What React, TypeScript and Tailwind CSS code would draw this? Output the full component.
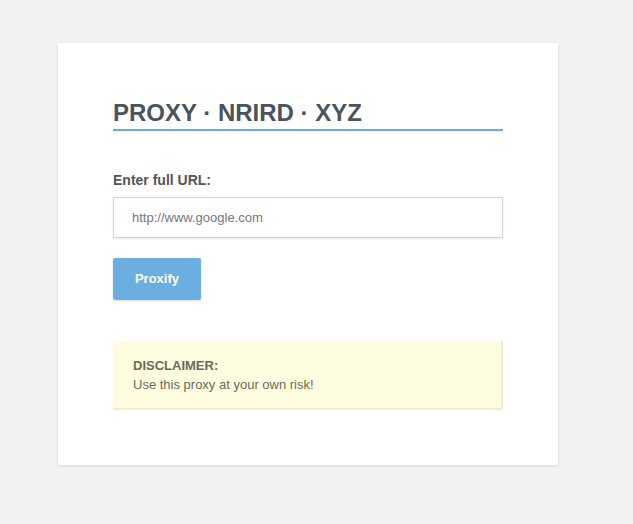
import React from 'react';

export default function App() {
  return (
    <div className="min-h-[524px] bg-[#f2f2f2] pt-[43px] pl-[58px] font-['Liberation_Sans',Arial,sans-serif]">
      <div className="w-[500px] bg-white px-[55px] pt-[55px] pb-[55px] shadow-[0_1px_3px_rgba(0,0,0,0.12)]">
        <h1 className="border-b-2 border-[#6aaddf] pb-[1px] text-[24px] font-bold leading-[30px] text-[#4b545c]">
          PROXY · NRIRD · XYZ
        </h1>

        <form className="mt-[40px]" onSubmit={(e) => e.preventDefault()}>
          <label className="block text-[14px] font-bold leading-[18px] text-[#555555]">Enter full URL:</label>
          <input
            type="text"
            placeholder="http://www.google.com"
            className="mt-[8px] block h-[41px] w-full border border-[#d6d6d6] px-[18px] text-[13px] text-[#555] shadow-[0_1px_2px_rgba(0,0,0,0.1)] outline-none placeholder:text-[#777777]"
          />
          <button
            type="submit"
            className="mt-[20px] h-[42px] w-[88px] rounded-[2px] bg-[#6aaee2] text-[13px] font-bold text-white shadow-[0_1px_2px_rgba(0,0,0,0.15)]"
          >
            Proxify
          </button>
        </form>

        <div className="mt-[41px] border-r-2 border-b-2 border-[#efefcf] bg-[#fffddf] px-[20px] pt-[15px] pb-[14px] text-[13px] leading-[19px] text-[#6b6a5a]">
          <div className="font-bold">DISCLAIMER:</div>
          <div>Use this proxy at your own risk!</div>
        </div>
      </div>
    </div>
  );
}
